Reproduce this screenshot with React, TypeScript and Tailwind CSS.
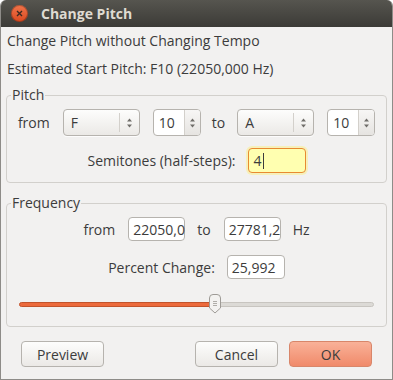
import React from 'react'

const font = { fontFamily: '"Open Sans", "DejaVu Sans", sans-serif' }

function Arrows() {
  return (
    <svg width="7" height="12" viewBox="0 0 7 12" className="block">
      <path d="M1 4.5 L3.5 1.5 L6 4.5 Z" fill="#6f6d69" />
      <path d="M1 7.5 L3.5 10.5 L6 7.5 Z" fill="#6f6d69" />
    </svg>
  )
}

function Combo({ value }: { value: string }) {
  return (
    <div className="flex h-[27px] w-[77px] items-stretch rounded-[4px] border border-[#b6b3ae] bg-gradient-to-b from-[#fdfdfc] to-[#ebe9e6] shadow-[0_1px_0_rgba(255,255,255,0.8)]">
      <div className="flex flex-1 items-center pl-[7px] text-[14px] text-[#3c3c3c]">{value}</div>
      <div className="my-[3px] w-px bg-[#d3d0cb]" />
      <div className="flex w-[19px] items-center justify-center">
        <Arrows />
      </div>
    </div>
  )
}

function Spin({ value }: { value: string }) {
  return (
    <div className="flex h-[27px] w-[48px] items-stretch rounded-[4px] border border-[#b6b3ae] bg-white">
      <div className="flex w-[30px] items-center pl-[5px] text-[14px] text-[#3c3c3c]">{value}</div>
      <div className="flex flex-1 items-center justify-center rounded-r-[3px] border-l border-[#d3d0cb] bg-gradient-to-b from-[#f7f6f5] to-[#e6e4e1]">
        <Arrows />
      </div>
    </div>
  )
}

function Field({ value, w, h = 24 }: { value: string; w: string; h?: number }) {
  return (
    <div
      className={`flex items-center rounded-[4px] border border-[#b6b3ae] bg-white pl-[4px] text-[14px] text-[#3c3c3c] ${w} ${
        h === 24 ? 'h-[24px]' : 'h-[23px]'
      }`}
    >
      {value}
    </div>
  )
}

function Button({ label, primary }: { label: string; primary?: boolean }) {
  return (
    <button
      type="button"
      className={
        primary
          ? 'flex h-[26px] w-[83px] items-center justify-center rounded-[4px] border border-[#d8866a] bg-gradient-to-b from-[#f9b198] to-[#f08a6a] text-[14px] text-[#3c3c3c]'
          : 'flex h-[26px] w-[83px] items-center justify-center rounded-[4px] border border-[#b6b3ae] bg-gradient-to-b from-[#fdfdfc] to-[#ebe9e6] text-[14px] text-[#3c3c3c]'
      }
    >
      {label}
    </button>
  )
}

function Thumb() {
  return (
    <svg width="14" height="20" viewBox="0 0 14 20" className="absolute left-[189px] top-[-8px]">
      <path
        d="M1.5 4 Q1.5 0.5 5 0.5 L9 0.5 Q12.5 0.5 12.5 4 L12.5 14 L7 19 L1.5 14 Z"
        fill="#f3f2f0"
        stroke="#9e9b96"
      />
      <path d="M5 7.5 H9 M5 9.5 H9 M5 11.5 H9" stroke="#9e9b96" strokeWidth="0.8" />
    </svg>
  )
}

export default function App() {
  return (
    <div
      style={font}
      className="flex h-[380px] w-[393px] flex-col overflow-hidden rounded-t-[6px] border-x border-b border-[#8e8c88] bg-[#f2f1f0] text-[#3c3c3c]"
    >
      <div className="flex h-[27px] shrink-0 items-center bg-gradient-to-b from-[#56554f] to-[#3c3b37]">
        <div className="ml-[10px] flex h-[17px] w-[17px] items-center justify-center rounded-full bg-gradient-to-b from-[#f0744a] to-[#d9481e] shadow-[inset_0_0_0_1px_rgba(0,0,0,0.25)]">
          <svg width="7" height="7" viewBox="0 0 7 7">
            <path d="M1 1 L6 6 M6 1 L1 6" stroke="#3a2a22" strokeWidth="1.4" />
          </svg>
        </div>
        <span className="ml-[13px] text-[14px] font-bold text-[#dfdbd2]">Change Pitch</span>
      </div>

      <div className="mt-[6px] pl-[6px] text-[14px] leading-[16px]">Change Pitch without Changing Tempo</div>
      <div className="mt-[12px] pl-[6px] text-[14px] leading-[16px]">Estimated Start Pitch: F10 (22050,000 Hz)</div>

      <fieldset className="mx-[5px] mt-[10px] h-[96px] rounded-[4px] border border-[#d2d0cc] px-0 pb-0 pt-[6px]">
        <legend className="ml-[4px] px-px text-[14px] leading-[16px]">Pitch</legend>
        <div className="flex h-[27px] items-center justify-center text-[14px]">
          <span>from</span>
          <div className="ml-[13px]">
            <Combo value="F" />
          </div>
          <div className="ml-[13px]">
            <Spin value="10" />
          </div>
          <span className="ml-[11px]">to</span>
          <div className="ml-[12px]">
            <Combo value="A" />
          </div>
          <div className="ml-[13px]">
            <Spin value="10" />
          </div>
        </div>
        <div className="mt-[12px] flex h-[25px] items-center justify-center text-[14px]">
          <span>Semitones (half-steps):</span>
          <div className="ml-[12px] flex h-[25px] w-[58px] items-center rounded-[4px] border border-[#e88a32] bg-[#ffffb0] pl-[5px] shadow-[0_0_0_2px_rgba(250,240,150,0.6)]">
            <span>4</span>
            <span className="ml-px h-[16px] w-px bg-[#3c3c3c]" />
          </div>
        </div>
      </fieldset>

      <fieldset className="mx-[5px] mt-[12px] h-[132px] rounded-[4px] border border-[#d2d0cc] px-0 pb-0 pt-[6px]">
        <legend className="ml-[4px] px-px text-[14px] leading-[16px]">Frequency</legend>
        <div className="flex h-[24px] items-center justify-center text-[14px]">
          <span>from</span>
          <div className="ml-[13px]">
            <Field value="22050,0" w="w-[57px]" />
          </div>
          <span className="ml-[12px]">to</span>
          <div className="ml-[13px]">
            <Field value="27781,2" w="w-[57px]" />
          </div>
          <span className="ml-[12px]">Hz</span>
        </div>
        <div className="mt-[14px] flex h-[24px] items-center justify-center text-[14px]">
          <span>Percent Change:</span>
          <div className="ml-[12px]">
            <Field value="25,992" w="w-[58px]" />
          </div>
        </div>
        <div className="relative mx-[12px] mt-[23px] flex h-[5px]">
          <div className="h-[5px] w-[196px] rounded-l-full border border-[#c2542c] bg-[#ec6a3c]" />
          <div className="h-[5px] flex-1 rounded-r-full border border-[#c8c5c0] bg-[#dcdad6]" />
          <Thumb />
        </div>
      </fieldset>

      <div className="mt-[14px] flex px-[20px]">
        <div className="w-[82px]">
          <Button label="Preview" />
        </div>
        <div className="ml-auto flex gap-[11px]">
          <Button label="Cancel" />
          <Button label="OK" primary />
        </div>
      </div>
    </div>
  )
}
